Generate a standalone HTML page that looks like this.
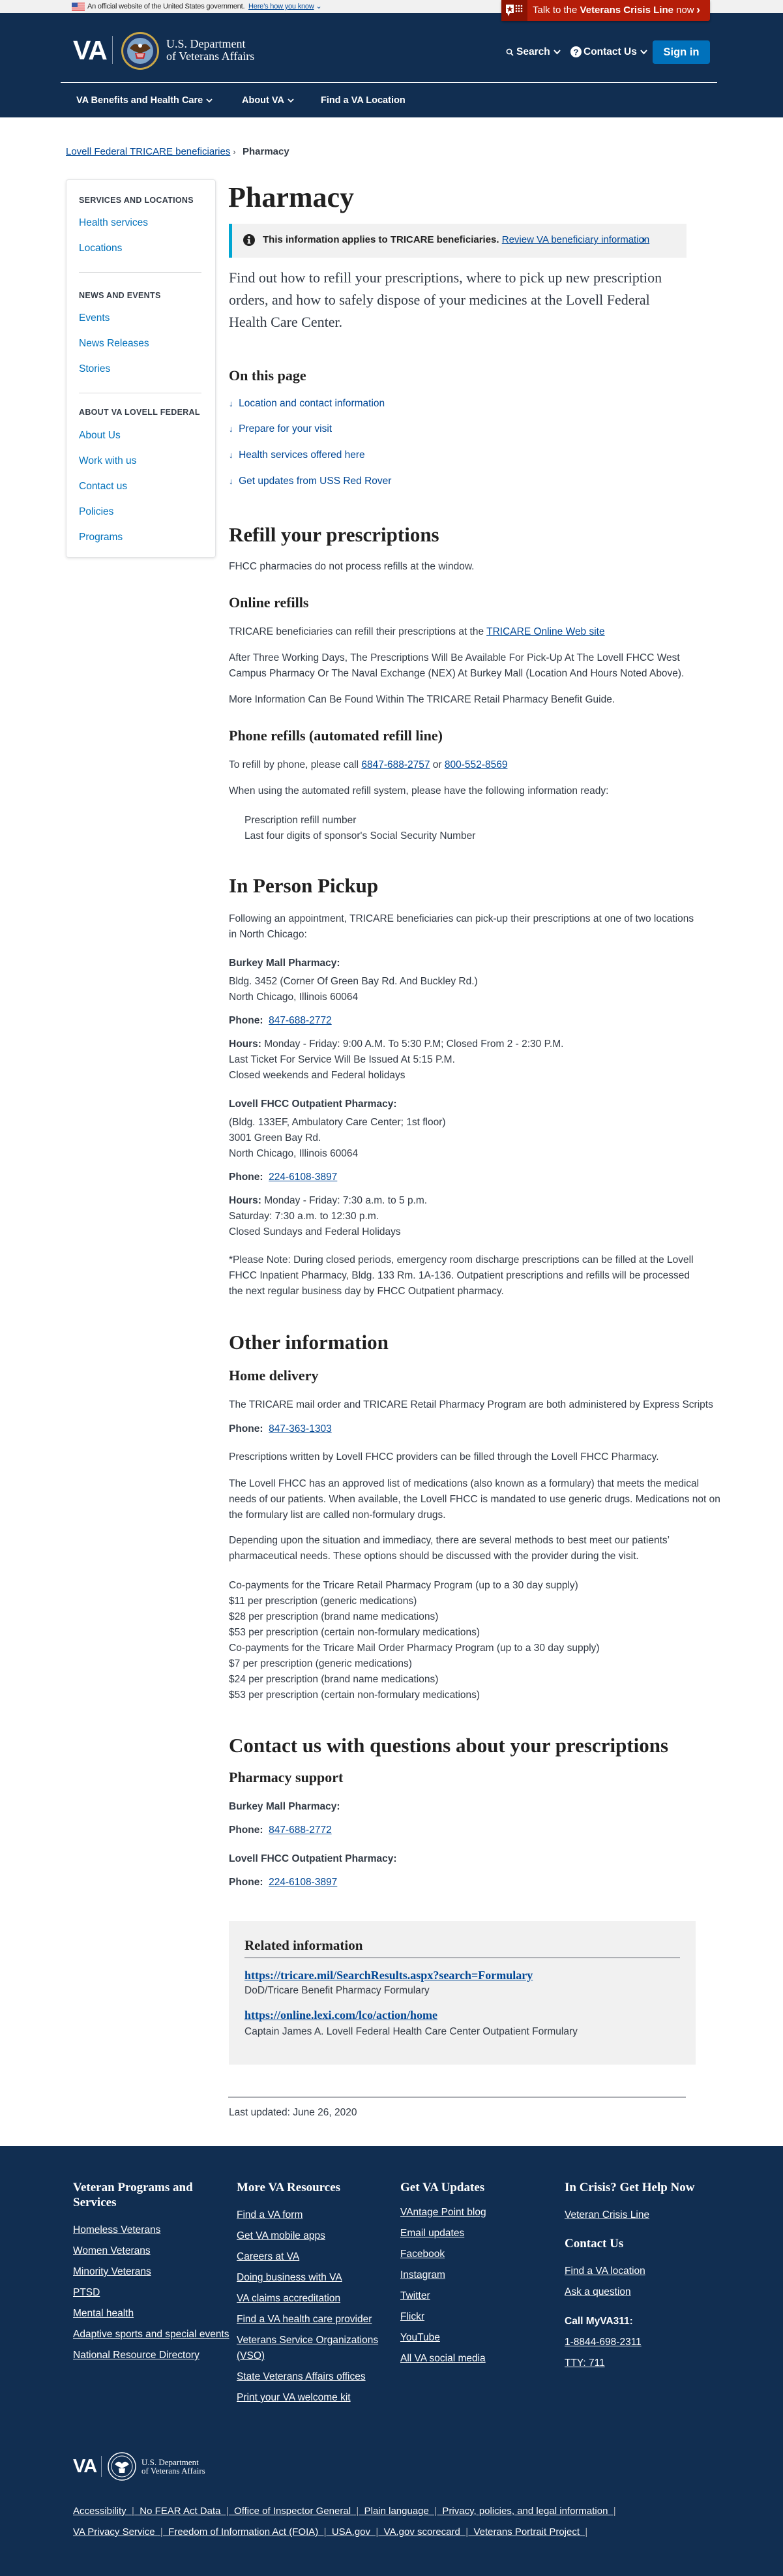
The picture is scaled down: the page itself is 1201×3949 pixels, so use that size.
<!DOCTYPE html>
<html><head><meta charset="utf-8">
<style>
*{margin:0;padding:0;box-sizing:border-box}
html,body{width:1201px;height:3949px;overflow:hidden;background:#fff}
body{position:relative;font-family:"Liberation Sans",sans-serif;color:#323a45;font-size:15.5px}
.a{position:absolute;white-space:nowrap}
.l{line-height:24px}
a,.lk{color:#004795;text-decoration:underline}
.serif{font-family:"Liberation Serif",serif}
.h2{font-family:"Liberation Serif",serif;font-weight:bold;color:#212121;font-size:31px;line-height:40px}
.h3{font-family:"Liberation Serif",serif;font-weight:bold;color:#212121;font-size:22px;line-height:30px}
.b{font-weight:bold}
.side{font-size:15.5px;color:#0071bb;line-height:24px}
.sh{font-size:12.5px;font-weight:bold;letter-spacing:.3px;color:#323a45;line-height:20px}
.f{color:#fff;text-decoration:underline;font-size:15.5px;line-height:24px}
.fh{font-family:"Liberation Serif",serif;font-weight:bold;color:#fff;font-size:19px;line-height:23px}
.ch{display:inline-block;vertical-align:middle;margin-left:5px}
</style></head><body>

<!-- gov banner -->
<div class="a" style="left:0;top:0;width:1201px;height:20px;background:#f1f1f1"></div>
<svg class="a" style="left:110px;top:4px" width="20" height="13" viewBox="0 0 20 13"><rect width="20" height="13" fill="#fff"/><g fill="#e04848"><rect y="0" width="20" height="1.5"/><rect y="3" width="20" height="1.5"/><rect y="6" width="20" height="1.5"/><rect y="9" width="20" height="1.5"/><rect y="11.5" width="20" height="1.5"/></g><rect width="9" height="7" fill="#3b5ba7"/></svg>
<div class="a" style="left:134px;top:3px;font-size:11px;line-height:15px;color:#212121;letter-spacing:-0.2px">An official website of the United States government. &nbsp;<span style="color:#004795;text-decoration:underline">Here’s how you know</span> <span style="color:#004795">⌄</span></div>

<!-- header -->
<div class="a" style="left:0;top:20px;width:1201px;height:160px;background:#112e51"></div>
<div class="a" style="left:769px;top:0;width:320px;height:32px;background:#b51d09;border-radius:0 0 3px 3px;box-shadow:0 2px 3px rgba(0,0,0,.3)"></div>
<div class="a" style="left:769px;top:0;width:40px;height:32px;background:#8b1303"></div>
<svg class="a" style="left:775px;top:5px" width="30" height="22" viewBox="0 0 30 22"><rect x="1" y="2" width="12" height="13" fill="#fff"/><path d="M3 15 L5 20 L7 15Z" fill="#fff"/><path d="M7 4 L8.3 7.5 L12 7.6 L9 9.8 L10.1 13.3 L7 11.2 L3.9 13.3 L5 9.8 L2 7.6 L5.7 7.5Z" fill="#8b1303"/><g fill="#fff"><circle cx="17" cy="4" r="1.3"/><circle cx="21" cy="4" r="1.3"/><circle cx="25" cy="4" r="1.3"/><circle cx="17" cy="8" r="1.3"/><circle cx="21" cy="8" r="1.3"/><circle cx="25" cy="8" r="1.3"/><circle cx="17" cy="12" r="1.3"/><circle cx="21" cy="12" r="1.3"/><circle cx="25" cy="12" r="1.3"/></g></svg>
<div class="a" style="left:817px;top:6px;font-size:15px;line-height:20px;color:#fff">Talk to the <b>Veterans Crisis Line</b> now</div>
<div class="a b" style="left:1068px;top:4px;font-size:18px;line-height:22px;color:#fff">›</div>

<div class="a" style="left:112px;top:54px;font-size:41px;font-weight:bold;color:#fff;line-height:46px;letter-spacing:-1px">VA</div>
<div class="a" style="left:172px;top:55px;width:1px;height:43px;background:#8c9aad"></div>
<svg class="a" style="left:185px;top:48px" width="60" height="60" viewBox="0 0 60 60"><circle cx="30" cy="30" r="29" fill="#c9a646"/><circle cx="30" cy="30" r="26" fill="#1d3563"/><circle cx="30" cy="30" r="20" fill="#7ea4c8"/><path d="M14 26 Q22 14 30 24 Q38 14 46 26 L40 30 L30 34 L20 30Z" fill="#5a3515"/><circle cx="30" cy="22" r="3" fill="#fff"/><path d="M22 33 L38 33 L36 42 L24 42Z" fill="#c0282d"/><path d="M24 34 L36 34 L34 40 L26 40Z" fill="#fff" opacity=".6"/></svg>
<div class="a serif" style="left:255px;top:58px;font-size:18px;line-height:19px;color:#fff">U.S. Department<br>of Veterans Affairs</div>

<div class="a b" style="left:776px;top:70px;font-size:15.5px;line-height:20px;color:#fff"><svg class="ch" style="margin:0 4px 0 0" width="12" height="12" viewBox="0 0 12 12"><circle cx="5" cy="5" r="3.6" stroke="#fff" stroke-width="1.6" fill="none"/><path d="M7.6 7.6 L11 11" stroke="#fff" stroke-width="1.8"/></svg>Search<svg class="ch" width="11" height="8" viewBox="0 0 11 8"><path d="M1 1 L5.5 6 L10 1" stroke="#fff" stroke-width="2" fill="none"/></svg></div>
<div class="a b" style="left:875px;top:70px;font-size:15.5px;line-height:20px;color:#fff"><svg class="ch" style="margin:0 3px 0 0" width="17" height="17" viewBox="0 0 17 17"><circle cx="8.5" cy="8.5" r="8.5" fill="#fff"/><text x="8.5" y="13.5" font-family="Liberation Sans" font-weight="bold" font-size="13" text-anchor="middle" fill="#112e51">?</text></svg>Contact Us<svg class="ch" width="11" height="8" viewBox="0 0 11 8"><path d="M1 1 L5.5 6 L10 1" stroke="#fff" stroke-width="2" fill="none"/></svg></div>
<div class="a b" style="left:1001px;top:62px;width:88px;height:36px;background:#0071bb;border-radius:4px;color:#fff;font-size:16.5px;line-height:36px;text-align:center">Sign in</div>

<div class="a" style="left:93px;top:126px;width:1007px;height:1px;background:#fff"></div>
<div class="a b" style="left:117px;top:144px;font-size:14.5px;line-height:20px;color:#fff">VA Benefits and Health Care<svg class="ch" width="10" height="7" viewBox="0 0 10 7"><path d="M1 1 L5 5 L9 1" stroke="#fff" stroke-width="1.8" fill="none"/></svg></div>
<div class="a b" style="left:371px;top:144px;font-size:14.5px;line-height:20px;color:#fff">About VA<svg class="ch" width="10" height="7" viewBox="0 0 10 7"><path d="M1 1 L5 5 L9 1" stroke="#fff" stroke-width="1.8" fill="none"/></svg></div>
<div class="a b" style="left:492px;top:144px;font-size:14.5px;line-height:20px;color:#fff">Find a VA Location</div>

<!-- breadcrumb -->
<div class="a l" style="left:101px;top:221px;font-size:15px"><a>Lovell Federal TRICARE beneficiaries</a> <span style="font-size:12px">›</span></div>
<div class="a l b" style="left:372px;top:221px;color:#323a45;font-size:15px">Pharmacy</div>

<!-- sidebar -->
<div class="a" style="left:101px;top:275px;width:230px;height:580px;border:1px solid #e2e3e5;border-radius:4px;box-shadow:0 1px 4px rgba(0,0,0,.12)"></div>
<div class="a sh" style="left:121px;top:297px">SERVICES AND LOCATIONS</div>
<div class="a side" style="left:121px;top:330px">Health services</div>
<div class="a side" style="left:121px;top:369px">Locations</div>
<div class="a" style="left:121px;top:417px;width:188px;height:1px;background:#d6d7d9"></div>
<div class="a sh" style="left:121px;top:443px">NEWS AND EVENTS</div>
<div class="a side" style="left:121px;top:476px">Events</div>
<div class="a side" style="left:121px;top:515px">News Releases</div>
<div class="a side" style="left:121px;top:554px">Stories</div>
<div class="a" style="left:121px;top:602px;width:188px;height:1px;background:#d6d7d9"></div>
<div class="a sh" style="left:121px;top:622px">ABOUT VA LOVELL FEDERAL</div>
<div class="a side" style="left:121px;top:656px">About Us</div>
<div class="a side" style="left:121px;top:695px">Work with us</div>
<div class="a side" style="left:121px;top:734px">Contact us</div>
<div class="a side" style="left:121px;top:773px">Policies</div>
<div class="a side" style="left:121px;top:812px">Programs</div>

<!-- main -->
<div class="a serif b" style="left:350px;top:278px;font-size:44px;line-height:50px;color:#212121">Pharmacy</div>

<div class="a" style="left:351px;top:343px;width:702px;height:52px;background:#f1f1f1;border-left:5px solid #00a6d2"></div>
<svg class="a" style="left:373px;top:359px" width="18" height="18" viewBox="0 0 18 18"><circle cx="9" cy="9" r="9" fill="#212121"/><circle cx="9" cy="4.6" r="1.6" fill="#fff"/><path d="M6.5 7.5 H10.3 V13 H11.5 V14.5 H6.5 V13 H7.7 V9 H6.5Z" fill="#fff"/></svg>
<div class="a b" style="left:403px;top:357px;font-size:15px;line-height:22px;color:#212121">This information applies to TRICARE beneficiaries. <a style="font-weight:normal">Review VA beneficiary information</a></div>
<div class="a b" style="left:984px;top:356px;font-size:18px;line-height:22px;color:#004795">›</div>

<div class="a serif" style="left:351px;top:409px;font-size:22px;line-height:34px;color:#323a45;white-space:normal;width:705px">Find out how to refill your prescriptions, where to pick up new prescription orders, and how to safely dispose of your medicines at the Lovell Federal Health Care Center.</div>

<div class="a serif b" style="left:351px;top:561px;font-size:22px;line-height:30px;color:#212121">On this page</div>
<div class="a l" style="left:351px;top:607px;color:#004795"><span style="font-size:13px">↓</span>&nbsp; Location and contact information</div>
<div class="a l" style="left:351px;top:646px;color:#004795"><span style="font-size:13px">↓</span>&nbsp; Prepare for your visit</div>
<div class="a l" style="left:351px;top:686px;color:#004795"><span style="font-size:13px">↓</span>&nbsp; Health services offered here</div>
<div class="a l" style="left:351px;top:726px;color:#004795"><span style="font-size:13px">↓</span>&nbsp; Get updates from USS Red Rover</div>

<div class="a h2" style="left:351px;top:800px">Refill your prescriptions</div>
<div class="a l" style="left:351px;top:857px">FHCC pharmacies do not process refills at the window.</div>
<div class="a h3" style="left:351px;top:909px">Online refills</div>
<div class="a l" style="left:351px;top:957px">TRICARE beneficiaries can refill their prescriptions at the <a>TRICARE Online Web site</a></div>
<div class="a l" style="left:351px;top:997px">After Three Working Days, The Prescriptions Will Be Available For Pick-Up At The Lovell FHCC West<br>Campus Pharmacy Or The Naval Exchange (NEX) At Burkey Mall (Location And Hours Noted Above).</div>
<div class="a l" style="left:351px;top:1061px">More Information Can Be Found Within The TRICARE Retail Pharmacy Benefit Guide.</div>
<div class="a h3" style="left:351px;top:1113px">Phone refills (automated refill line)</div>
<div class="a l" style="left:351px;top:1161px">To refill by phone, please call <a>6847-688-2757</a> or <a>800-552-8569</a></div>
<div class="a l" style="left:351px;top:1201px">When using the automated refill system, please have the following information ready:</div>
<div class="a l" style="left:375px;top:1246px">Prescription refill number<br>Last four digits of sponsor's Social Security Number</div>

<div class="a h2" style="left:351px;top:1338px">In Person Pickup</div>
<div class="a l" style="left:351px;top:1397px">Following an appointment, TRICARE beneficiaries can pick-up their prescriptions at one of two locations<br>in North Chicago:</div>
<div class="a l b" style="left:351px;top:1465px">Burkey Mall Pharmacy:</div>
<div class="a l" style="left:351px;top:1493px">Bldg. 3452 (Corner Of Green Bay Rd. And Buckley Rd.)<br>North Chicago, Illinois 60064</div>
<div class="a l" style="left:351px;top:1553px"><b>Phone:</b>&nbsp; <a>847-688-2772</a></div>
<div class="a l" style="left:351px;top:1589px"><b>Hours:</b> Monday - Friday: 9:00 A.M. To 5:30 P.M; Closed From 2 - 2:30 P.M.<br>Last Ticket For Service Will Be Issued At 5:15 P.M.<br>Closed weekends and Federal holidays</div>
<div class="a l b" style="left:351px;top:1681px">Lovell FHCC Outpatient Pharmacy:</div>
<div class="a l" style="left:351px;top:1709px">(Bldg. 133EF, Ambulatory Care Center; 1st floor)<br>3001 Green Bay Rd.<br>North Chicago, Illinois 60064</div>
<div class="a l" style="left:351px;top:1793px"><b>Phone:</b>&nbsp; <a>224-6108-3897</a></div>
<div class="a l" style="left:351px;top:1829px"><b>Hours:</b> Monday - Friday: 7:30 a.m. to 5 p.m.<br>Saturday: 7:30 a.m. to 12:30 p.m.<br>Closed Sundays and Federal Holidays</div>
<div class="a l" style="left:351px;top:1920px">*Please Note: During closed periods, emergency room discharge prescriptions can be filled at the Lovell<br>FHCC Inpatient Pharmacy, Bldg. 133 Rm. 1A-136. Outpatient prescriptions and refills will be processed<br>the next regular business day by FHCC Outpatient pharmacy.</div>

<div class="a h2" style="left:351px;top:2038px">Other information</div>
<div class="a h3" style="left:351px;top:2094px">Home delivery</div>
<div class="a l" style="left:351px;top:2142px">The TRICARE mail order and TRICARE Retail Pharmacy Program are both administered by Express Scripts</div>
<div class="a l" style="left:351px;top:2179px"><b>Phone:</b>&nbsp; <a>847-363-1303</a></div>
<div class="a l" style="left:351px;top:2222px">Prescriptions written by Lovell FHCC providers can be filled through the Lovell FHCC Pharmacy.</div>
<div class="a l" style="left:351px;top:2263px">The Lovell FHCC has an approved list of medications (also known as a formulary) that meets the medical<br>needs of our patients. When available, the Lovell FHCC is mandated to use generic drugs. Medications not on<br>the formulary list are called non-formulary drugs.</div>
<div class="a l" style="left:351px;top:2350px">Depending upon the situation and immediacy, there are several methods to best meet our patients’<br>pharmaceutical needs. These options should be discussed with the provider during the visit.</div>
<div class="a l" style="left:351px;top:2419px">Co-payments for the Tricare Retail Pharmacy Program (up to a 30 day supply)<br>$11 per prescription (generic medications)<br>$28 per prescription (brand name medications)<br>$53 per prescription (certain non-formulary medications)<br>Co-payments for the Tricare Mail Order Pharmacy Program (up to a 30 day supply)<br>$7 per prescription (generic medications)<br>$24 per prescription (brand name medications)<br>$53 per prescription (certain non-formulary medications)</div>

<div class="a h2" style="left:351px;top:2656px">Contact us with questions about your prescriptions</div>
<div class="a h3" style="left:351px;top:2710px">Pharmacy support</div>
<div class="a l b" style="left:351px;top:2758px">Burkey Mall Pharmacy:</div>
<div class="a l" style="left:351px;top:2794px"><b>Phone:</b>&nbsp; <a>847-688-2772</a></div>
<div class="a l b" style="left:351px;top:2838px">Lovell FHCC Outpatient Pharmacy:</div>
<div class="a l" style="left:351px;top:2874px"><b>Phone:</b>&nbsp; <a>224-6108-3897</a></div>

<div class="a" style="left:351px;top:2945px;width:716px;height:220px;background:#f1f1f1"></div>
<div class="a h3" style="left:375px;top:2967px;font-size:21px">Related information</div>
<div class="a" style="left:375px;top:3000px;width:668px;height:2px;background:#aeb0b5"></div>
<div class="a serif b" style="left:375px;top:3015px;font-size:18px;line-height:26px;color:#004795;text-decoration:underline">https://tricare.mil/SearchResults.aspx?search=Formulary</div>
<div class="a l" style="left:375px;top:3040px">DoD/Tricare Benefit Pharmacy Formulary</div>
<div class="a serif b" style="left:375px;top:3076px;font-size:18px;line-height:26px;color:#004795;text-decoration:underline">https://online.lexi.com/lco/action/home</div>
<div class="a l" style="left:375px;top:3103px">Captain James A. Lovell Federal Health Care Center Outpatient Formulary</div>

<div class="a" style="left:350px;top:3214px;width:702px;height:2px;background:#aeb0b5"></div>
<div class="a l" style="left:351px;top:3227px">Last updated: June 26, 2020</div>

<!-- footer -->
<div class="a" style="left:0;top:3290px;width:1201px;height:659px;background:#112e51"></div>
<div class="a fh" style="left:112px;top:3342px">Veteran Programs and<br>Services</div>
<div class="a f" style="left:112px;top:3407px">Homeless Veterans</div>
<div class="a f" style="left:112px;top:3439px">Women Veterans</div>
<div class="a f" style="left:112px;top:3471px">Minority Veterans</div>
<div class="a f" style="left:112px;top:3503px">PTSD</div>
<div class="a f" style="left:112px;top:3535px">Mental health</div>
<div class="a f" style="left:112px;top:3567px">Adaptive sports and special events</div>
<div class="a f" style="left:112px;top:3599px">National Resource Directory</div>

<div class="a fh" style="left:363px;top:3342px">More VA Resources</div>
<div class="a f" style="left:363px;top:3384px">Find a VA form</div>
<div class="a f" style="left:363px;top:3416px">Get VA mobile apps</div>
<div class="a f" style="left:363px;top:3448px">Careers at VA</div>
<div class="a f" style="left:363px;top:3480px">Doing business with VA</div>
<div class="a f" style="left:363px;top:3512px">VA claims accreditation</div>
<div class="a f" style="left:363px;top:3544px">Find a VA health care provider</div>
<div class="a f" style="left:363px;top:3576px">Veterans Service Organizations</div>
<div class="a f" style="left:363px;top:3600px">(VSO)</div>
<div class="a f" style="left:363px;top:3632px">State Veterans Affairs offices</div>
<div class="a f" style="left:363px;top:3664px">Print your VA welcome kit</div>

<div class="a fh" style="left:614px;top:3342px">Get VA Updates</div>
<div class="a f" style="left:614px;top:3380px">VAntage Point blog</div>
<div class="a f" style="left:614px;top:3412px">Email updates</div>
<div class="a f" style="left:614px;top:3444px">Facebook</div>
<div class="a f" style="left:614px;top:3476px">Instagram</div>
<div class="a f" style="left:614px;top:3508px">Twitter</div>
<div class="a f" style="left:614px;top:3540px">Flickr</div>
<div class="a f" style="left:614px;top:3572px">YouTube</div>
<div class="a f" style="left:614px;top:3604px">All VA social media</div>

<div class="a fh" style="left:866px;top:3342px">In Crisis? Get Help Now</div>
<div class="a f" style="left:866px;top:3384px">Veteran Crisis Line</div>
<div class="a fh" style="left:866px;top:3428px">Contact Us</div>
<div class="a f" style="left:866px;top:3470px">Find a VA location</div>
<div class="a f" style="left:866px;top:3502px">Ask a question</div>
<div class="a b" style="left:866px;top:3547px;color:#fff;line-height:24px">Call MyVA311:</div>
<div class="a f" style="left:866px;top:3579px">1-8844-698-2311</div>
<div class="a f" style="left:866px;top:3611px">TTY: 711</div>

<div class="a" style="left:112px;top:3765px;font-size:29px;font-weight:bold;color:#fff;line-height:32px;letter-spacing:-1px">VA</div>
<div class="a" style="left:155px;top:3765px;width:1px;height:32px;background:#8c9aad"></div>
<svg class="a" style="left:165px;top:3759px" width="44" height="44" viewBox="0 0 44 44"><circle cx="22" cy="22" r="21" fill="none" stroke="#fff" stroke-width="1.5"/><circle cx="22" cy="22" r="16" fill="none" stroke="#fff" stroke-width="1"/><path d="M11 19 Q17 11 22 18 Q27 11 33 19 L28 22 L22 25 L16 22Z" fill="#fff"/><path d="M17 25 H27 L26 32 H18Z" fill="#fff"/></svg>
<div class="a serif" style="left:217px;top:3768px;font-size:13px;line-height:13px;color:#fff">U.S. Department<br>of Veterans Affairs</div>

<div class="a f" style="left:112px;top:3838px;font-size:15px">Accessibility <span style="text-decoration:none;color:#aeb0b5">&nbsp;|&nbsp;</span> No FEAR Act Data <span style="color:#aeb0b5">&nbsp;|&nbsp;</span> Office of Inspector General <span style="color:#aeb0b5">&nbsp;|&nbsp;</span> Plain language <span style="color:#aeb0b5">&nbsp;|&nbsp;</span> Privacy, policies, and legal information <span style="color:#aeb0b5">&nbsp;|</span></div>
<div class="a f" style="left:112px;top:3870px;font-size:15px">VA Privacy Service <span style="color:#aeb0b5">&nbsp;|&nbsp;</span> Freedom of Information Act (FOIA) <span style="color:#aeb0b5">&nbsp;|&nbsp;</span> USA.gov <span style="color:#aeb0b5">&nbsp;|&nbsp;</span> VA.gov scorecard <span style="color:#aeb0b5">&nbsp;|&nbsp;</span> Veterans Portrait Project <span style="color:#aeb0b5">&nbsp;|</span></div>

</body></html>
